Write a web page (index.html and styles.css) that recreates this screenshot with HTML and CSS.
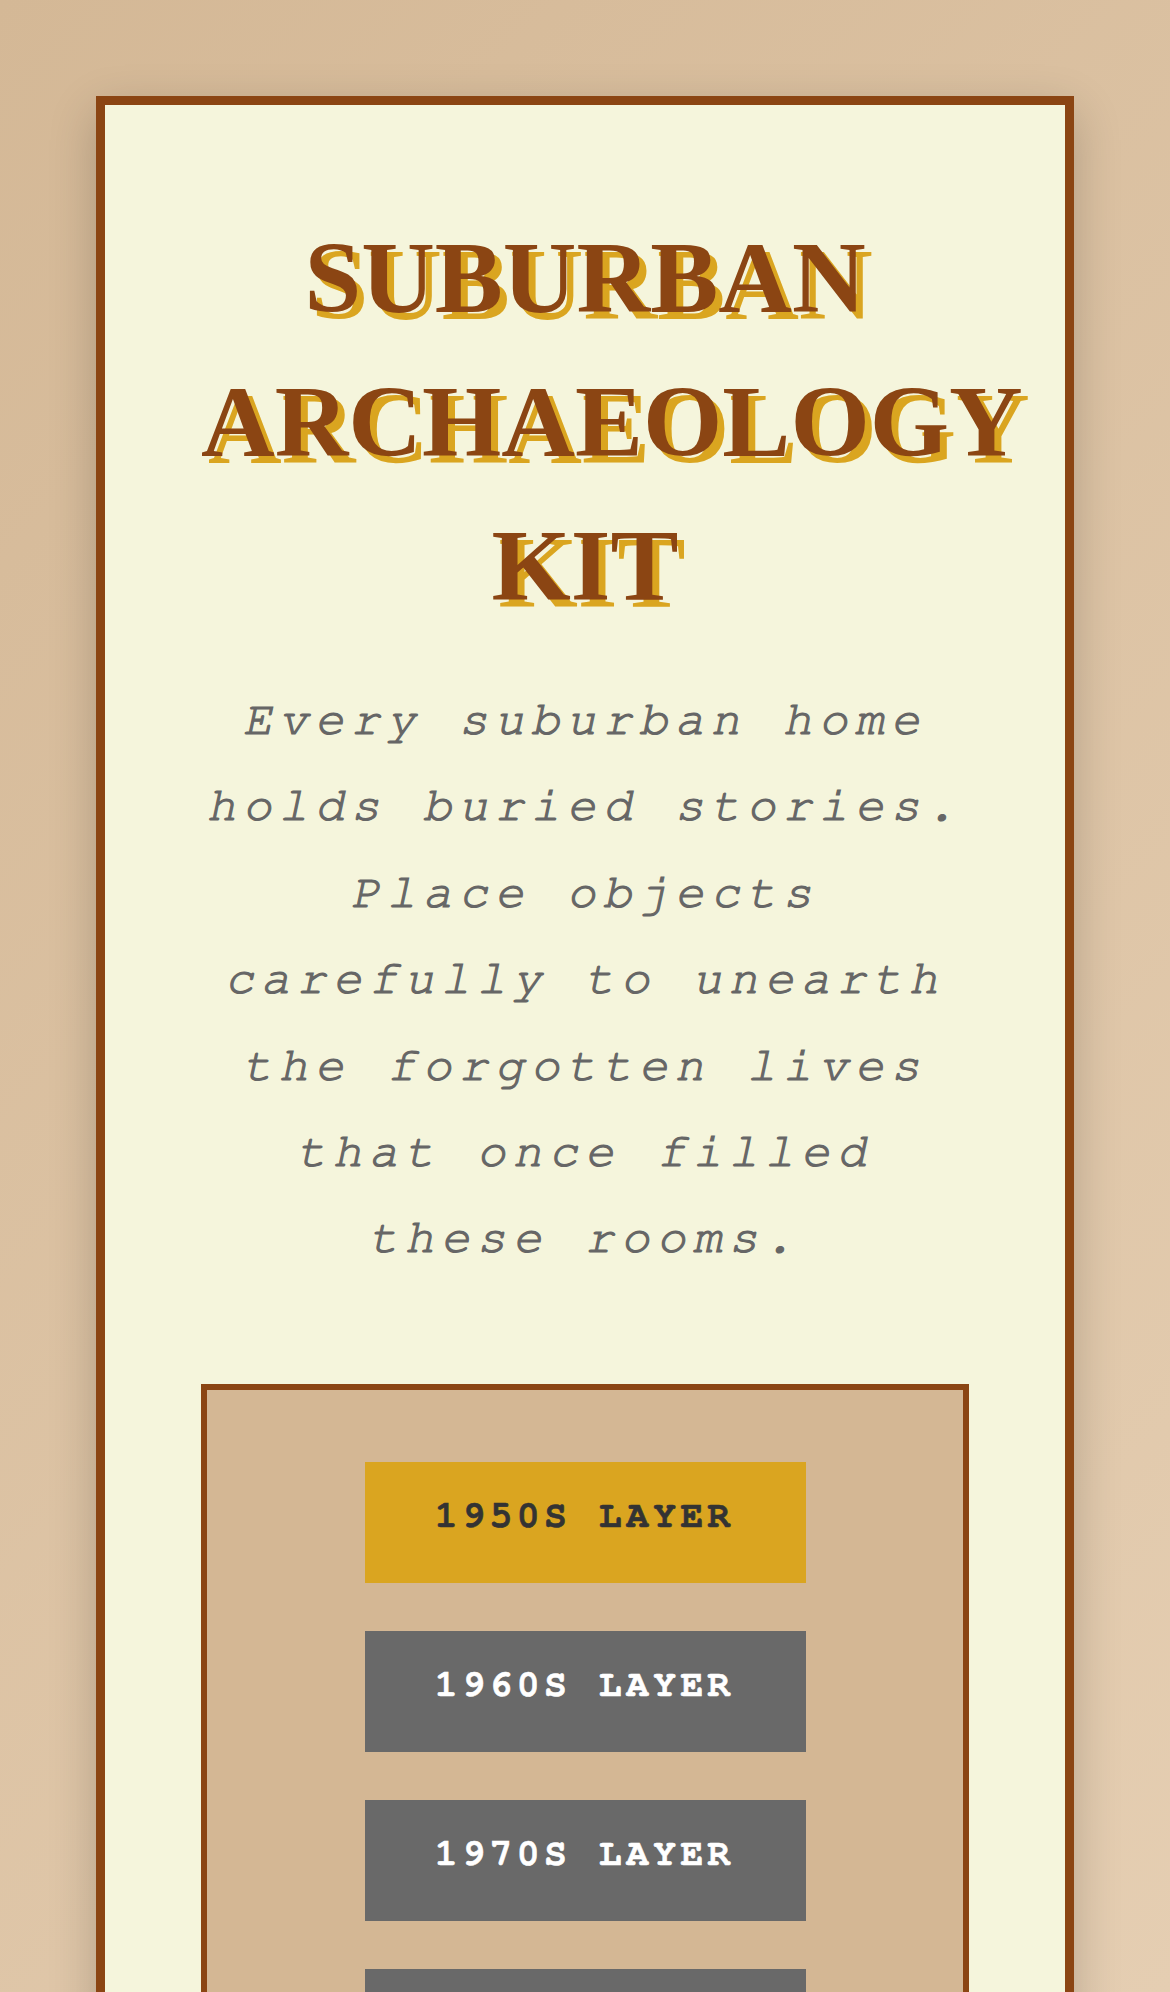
FILE: index.html
```html
<!DOCTYPE html>
<html lang="en">
<head>
  <meta charset="UTF-8" />
  <meta name="viewport" content="width=device-width, initial-scale=1.0">
  <title>Suburban Archaeology Kit</title>
  <link rel="stylesheet" href="styles.css">
</head>
<body>
  <div class="kit">
    <h1 class="title">Suburban Archaeology Kit</h1>
    <p class="intro">Every suburban home holds buried stories. Place objects carefully to unearth the forgotten lives that once filled these rooms.</p>

    <div class="layers">
      <button class="layer-btn active">1950s Layer</button>
      <button class="layer-btn">1960s Layer</button>
      <button class="layer-btn">1970s Layer</button>
      <button class="layer-btn">1980s Layer</button>
      <button class="layer-btn">1990s Layer</button>
    </div>
  </div>

  <script>
    document.querySelectorAll('.layer-btn').forEach(btn => {
      btn.addEventListener('click', function () {
        document.querySelectorAll('.layer-btn').forEach(b => b.classList.remove('active'));
        btn.classList.add('active');
      });
    });
  </script>
</body>
</html>
```

FILE: styles.css
```css
html, body {
  margin: 0;
  padding: 0;
}
body {
  min-height: 100vh;
  padding: 96px;
  box-sizing: border-box;
  background: linear-gradient(135deg, #d4b896 0%, #e5ceb2 100%) fixed;
  font-family: "Nimbus Mono PS", "FreeMono", "Courier New", "Liberation Mono", monospace;
}
.kit {
  background-color: #f5f5dc;
  border: 9px solid #8b4513;
  padding: 101px 96px 96px;
  box-shadow: 0 15px 45px rgba(0,0,0,0.2);
}
.title {
  margin: 0 0 42px;
  font-family: "Liberation Serif", "Times New Roman", serif;
  font-weight: bold;
  font-size: 102px;
  line-height: 144px;
  text-align: center;
  text-transform: uppercase;
  color: #8b4513;
  text-shadow: 7px 7px 0 #daa520;
}
.intro {
  margin: -3px 0 102px;
  font-style: italic;
  font-size: 48px;
  line-height: 86.4px;
  letter-spacing: 7.2px;
  text-align: center;
  color: #666;
  -webkit-text-stroke: 1.2px #666;
}
.layers {
  display: flex;
  flex-direction: column;
  align-items: center;
  gap: 48px;
  padding: 72px 0;
  background-color: #d4b794;
  border: 6px solid #8b4513;
}
.layer-btn {
  width: 441px;
  height: 121px;
  padding: 0 0 12px;
  border: none;
  background-color: #696969;
  color: white;
  font-family: "Nimbus Mono PS", "FreeMono", "Courier New", "Liberation Mono", monospace;
  font-weight: bold;
  font-size: 38px;
  letter-spacing: 4.5px;
  text-transform: uppercase;
  -webkit-text-stroke: 0.6px currentColor;
  cursor: pointer;
}
.layer-btn.active {
  background-color: #daa520;
  color: #333;
}
```
